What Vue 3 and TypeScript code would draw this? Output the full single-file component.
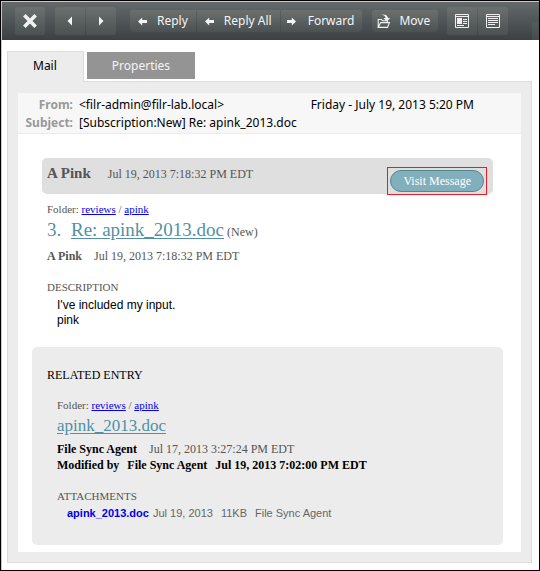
<script setup lang="ts">
import { ref } from 'vue'

type Tab = 'mail' | 'properties'
const activeTab = ref<Tab>('mail')
</script>

<template>
  <div class="window">
    <header class="toolbar">
      <div class="group tall">
        <button type="button" aria-label="Close">
          <svg width="14" height="14" viewBox="0 0 14 14">
            <path d="M2.6 2.6 11.4 11.4M11.4 2.6 2.6 11.4" stroke="#f1f1f1" stroke-width="3.6" stroke-linecap="square" />
          </svg>
        </button>
      </div>
      <div class="group tall">
        <button type="button" aria-label="Previous">
          <svg width="6" height="10" viewBox="0 0 6 10"><path d="M5 0.5V9.5L0.5 5Z" fill="#f4f4f4" /></svg>
        </button>
        <button type="button" aria-label="Next">
          <svg width="6" height="10" viewBox="0 0 6 10"><path d="M1 0.5V9.5L5.5 5Z" fill="#f4f4f4" /></svg>
        </button>
      </div>
      <div class="group actions">
        <button type="button">
          <svg width="9" height="9" viewBox="0 0 9 9"><path d="M0 4.5 4.2 0.5V3H9V6H4.2V8.5Z" fill="#f4f4f4" /></svg>
          <span>Reply</span>
        </button>
        <button type="button">
          <svg width="9" height="9" viewBox="0 0 9 9"><path d="M0 4.5 4.2 0.5V3H9V6H4.2V8.5Z" fill="#f4f4f4" /></svg>
          <span>Reply All</span>
        </button>
        <button type="button" class="forward">
          <svg width="9" height="9" viewBox="0 0 9 9"><path d="M9 4.5 4.8 0.5V3H0V6H4.8V8.5Z" fill="#f4f4f4" /></svg>
          <span>Forward</span>
        </button>
      </div>
      <div class="group move">
        <button type="button">
          <svg width="14" height="15" viewBox="0 0 14 15">
            <path d="M1.2 13V5.5H4.5L5.5 6.8H10.5V8.5M1.2 13.4 3.6 8.6H12.4L10.5 13.4Z" fill="none" stroke="#f1f1f1" stroke-width="1.1" />
            <path d="M4 0.6C8 0.2 10.8 1.2 11 4H13.3L9.8 7.6 6.5 4H8.6C8.4 2.2 6.8 1.3 4 0.6Z" fill="#f1f1f1" />
          </svg>
          <span>Move</span>
        </button>
      </div>
      <div class="group tall">
        <button type="button" aria-label="HTML view">
          <svg width="14" height="14" viewBox="0 0 14 14">
            <path d="M0.5 0.5H13.5V13.5H0.5ZM0 2.5H14M8 5.5H12M8 7.5H12M8 9.5H12M2 11.5H9" fill="none" stroke="#efefef" />
            <rect x="2" y="4" width="5" height="6" fill="#efefef" />
          </svg>
        </button>
        <button type="button" aria-label="Plain text view">
          <svg width="14" height="14" viewBox="0 0 14 14">
            <path d="M0.5 0.5H13.5V13.5H0.5ZM0 2.5H14M2 4.5H12M2 6.5H12M2 8.5H12M2 10.5H9" fill="none" stroke="#efefef" />
          </svg>
        </button>
      </div>
      <span class="edge"></span>
    </header>

    <nav class="tabs">
      <button type="button" :class="['tab', { active: activeTab === 'mail' }]" @click="activeTab = 'mail'">Mail</button>
      <button type="button" :class="['tab', { active: activeTab === 'properties' }]" @click="activeTab = 'properties'">Properties</button>
    </nav>

    <main class="panel">
      <div class="message">
        <dl class="headers">
          <dt>From:</dt>
          <dd>
            <span>&lt;filr-admin@filr-lab.local&gt;</span>
            <time>Friday - July 19, 2013 5:20 PM</time>
          </dd>
          <dt>Subject:</dt>
          <dd>[Subscription:New] Re: apink_2013.doc</dd>
        </dl>

        <div class="body">
          <div class="banner">
            <strong>A Pink</strong>
            <time>Jul 19, 2013 7:18:32 PM EDT</time>
            <div class="highlight"><a href="#" class="visit">Visit Message</a></div>
          </div>

          <article class="entry">
            <p class="folder">Folder: <a href="#">reviews</a> / <a href="#">apink</a></p>
            <h1><span class="number">3.</span><a href="#">Re: apink_2013.doc</a><small>(New)</small></h1>
            <p class="byline"><strong>A Pink</strong><time>Jul 19, 2013 7:18:32 PM EDT</time></p>
            <h3>DESCRIPTION</h3>
            <p class="description">I've included my input.<br />pink</p>
          </article>

          <section class="related">
            <h2>RELATED ENTRY</h2>
            <div class="related-body">
              <p class="folder">Folder: <a href="#">reviews</a> / <a href="#">apink</a></p>
              <a href="#" class="file">apink_2013.doc</a>
              <p class="agent"><strong>File Sync Agent</strong><time>Jul 17, 2013 3:27:24 PM EDT</time></p>
              <p class="modified"><span>Modified by</span><span>File Sync Agent</span><time>Jul 19, 2013 7:02:00 PM EDT</time></p>
              <h3>ATTACHMENTS</h3>
              <p class="attachment">
                <a href="#">apink_2013.doc</a>
                <span>Jul 19, 2013</span>
                <span>11KB</span>
                <span>File Sync Agent</span>
              </p>
            </div>
          </section>
        </div>
      </div>
    </main>
  </div>
</template>

<style>
body {
  margin: 0;
  background: #fff;
}
</style>

<style scoped>
* {
  box-sizing: border-box;
}
p, h1, h2, h3, dl, dd {
  margin: 0;
}
button {
  border: 0;
  padding: 0;
  font: inherit;
  color: inherit;
  background: none;
}
svg {
  display: block;
  flex: none;
}
.window {
  display: flex;
  flex-direction: column;
  min-height: 100vh;
  border: 1px solid #000;
  padding: 1px 0 7px 1px;
  background: #fff;
  box-shadow: inset 1px 1px 0 #c8c8c8;
  font: 12px/16px "Noto Sans", "Open Sans", sans-serif;
}
.toolbar {
  display: flex;
  align-items: center;
  height: 38px;
  padding-left: 13px;
  gap: 10px;
  background: linear-gradient(#646a6c, #3b4043);
  color: #f4f4f4;
}
.group {
  display: flex;
  flex: none;
  gap: 1px;
  height: 22px;
  border-radius: 3px;
  overflow: hidden;
}
.group button {
  display: flex;
  align-items: center;
  justify-content: center;
  background: linear-gradient(#6b706f, #4b5052);
}
.tall {
  height: 28px;
}
.tall button {
  width: 30px;
}
.edge {
  align-self: flex-end;
  width: 7px;
  height: 18px;
  margin-left: auto;
  background: linear-gradient(#565c5e, #464b4e);
}
.actions {
  margin-left: 4px;
}
.actions button {
  gap: 10px;
  padding: 0 8px;
}
.actions .forward {
  padding-left: 6px;
  gap: 12px;
}
.move button {
  gap: 8px;
  padding: 0 8px 0 5px;
}
.move + .tall {
  margin-left: -1px;
}
.tabs {
  display: flex;
  align-items: flex-start;
  gap: 3px;
  padding: 11px 5px 0;
}
.tab {
  height: 27px;
  margin-top: 1px;
  padding: 0 25px;
  color: #f4f4f4;
  background: #949494;
}
.tab.active {
  position: relative;
  height: 31px;
  margin: 0 0 -1px;
  padding: 0 26px 2px 25px;
  border: 1px solid #dcdcdc;
  border-bottom: 0;
  color: #000;
  background: #ececec;
}
.panel {
  flex: 1;
  display: flex;
  margin: 0 7px 0 5px;
  padding: 11px 10px 10px;
  border: 1px solid #dcdcdc;
  background: #ececec;
}
.message {
  flex: 1;
  background: #fff;
}
.headers {
  display: grid;
  grid-template-columns: 55px 1fr;
  column-gap: 6px;
  padding: 3px 1px 1px 0;
  border-bottom: 1px solid #ececec;
  background: #f7f7f7;
  line-height: 18px;
}
.headers dt {
  text-align: right;
  font-weight: bold;
  color: #999;
}
.headers dd {
  display: flex;
  justify-content: space-between;
  padding-right: 46px;
}
.body {
  padding: 24px 18px 7px 14px;
  font-family: "Liberation Serif", serif;
  color: #555;
}
.banner {
  display: flex;
  align-items: flex-start;
  gap: 17px;
  height: 36px;
  margin: 0 10px;
  padding: 0 6px 0 5px;
  border-radius: 5px;
  background: #dfdfdf;
}
.banner strong {
  font-size: 15px;
  line-height: 30px;
}
.banner time {
  line-height: 32px;
}
.highlight {
  margin: 9px 0 0 auto;
  padding: 2px;
  border: 1px solid #ed1c24;
}
.visit {
  display: block;
  padding: 0 12px;
  border: 1px solid #578592;
  border-radius: 11px;
  line-height: 20px;
  color: #fff;
  text-decoration: none;
  background: #82afbc;
}
.entry {
  padding: 8px 15px 19px;
}
.folder {
  font-size: 11px;
  line-height: 14px;
}
.folder a {
  color: #00e;
}
h1 {
  display: flex;
  align-items: baseline;
  font-size: 19px;
  font-weight: normal;
  line-height: 28px;
  color: #5191a3;
}
h1 .number {
  width: 24px;
}
h1 a, .file {
  color: #5191a3;
  text-underline-offset: 2px;
}
h1 small {
  margin-left: 3px;
  font-size: 12px;
  color: #555;
}
.byline, .agent {
  display: flex;
  gap: 12px;
}
.byline {
  line-height: 20px;
}
h3 {
  font-size: 11px;
  font-weight: normal;
  line-height: 14px;
}
.byline + h3 {
  margin-top: 14px;
}
.description {
  padding: 4px 10px 0;
  font: 12px/15px "Liberation Sans", sans-serif;
  color: #000;
}
.related {
  padding: 20px 15px 25px;
  border-radius: 5px;
  background: #ececec;
}
h2 {
  font-size: 12px;
  font-weight: normal;
  line-height: 16px;
  color: #000;
}
.related-body {
  padding: 15px 10px 0;
}
.file {
  display: block;
  padding-bottom: 1px;
  font-size: 17px;
  line-height: 28px;
}
.agent strong, .modified {
  color: #000;
}
.modified {
  display: flex;
  gap: 8px;
  font-weight: bold;
}
.modified + h3 {
  margin-top: 16px;
}
.attachment {
  display: flex;
  gap: 8px;
  padding: 3px 10px 0;
  font: 11px/14px "Liberation Sans", sans-serif;
  color: #666;
}
.attachment a {
  margin-right: -4px;
  font-weight: bold;
  color: #00e;
  text-decoration: none;
}
</style>
